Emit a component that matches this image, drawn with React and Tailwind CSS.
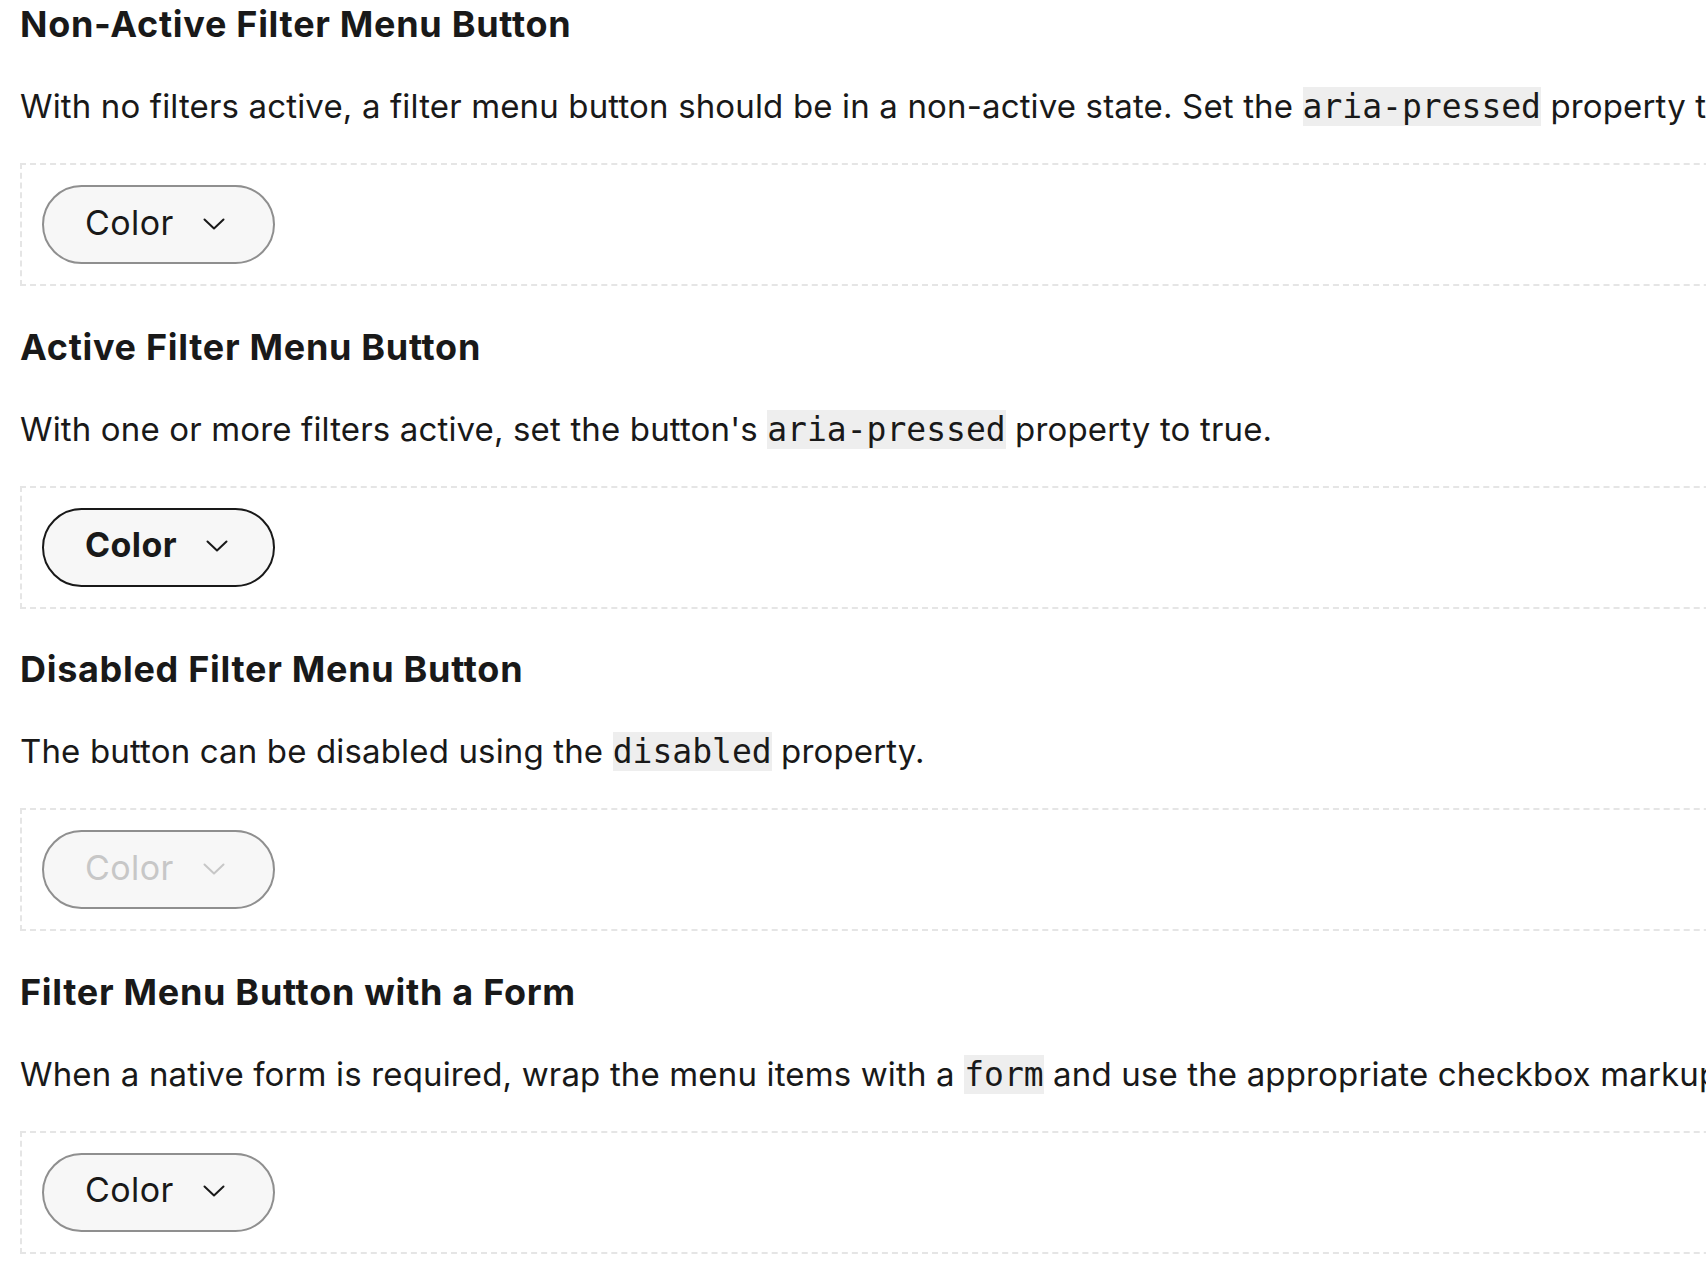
import React from 'react';

const Chevron = ({ className }) => (
  <svg width="22" height="12" viewBox="0 0 22 12" fill="none" className={className}>
    <path d="M1.5 1.5 L11 10.5 L20.5 1.5" stroke="currentColor" strokeWidth="2" strokeLinecap="round" strokeLinejoin="round" />
  </svg>
);

const FilterMenuButton = ({ variant = 'default' }) => {
  const styles = {
    default: 'border-[#8f8f8f] text-[#191919] font-normal',
    active: 'border-[#191919] text-[#191919] font-bold',
    disabled: 'border-[#8f8f8f] text-[#c7c7c7] font-normal',
  };
  return (
    <button
      type="button"
      aria-pressed={variant === 'active'}
      disabled={variant === 'disabled'}
      className={`flex h-[79px] w-[233px] items-center rounded-full border-2 bg-[#f7f7f7] pl-[41px] text-[34px] leading-none tracking-[0.4px] ${styles[variant]}`}
    >
      <span className="mb-[4px]">Color</span>
      <Chevron className="ml-[29px] mb-[2px]" />
    </button>
  );
};

const Code = ({ children }) => (
  <code className="bg-[#eeeeee] font-['DejaVu_Sans_Mono',monospace] text-[33px] leading-none tracking-normal">
    {children}
  </code>
);

const Section = ({ title, children, variant }) => (
  <section className="mb-[36.67px]">
    <h3 className="text-[36px] font-bold leading-[48px] tracking-[0.7px] text-[#191919]">{title}</h3>
    <p className="mt-[34px] whitespace-nowrap text-[33px] leading-[48px] tracking-[0.15px] text-[#191919]">{children}</p>
    <div className="mt-[33px] w-[1800px] border-2 border-dashed border-[#e5e5e5] p-[20px]">
      <FilterMenuButton variant={variant} />
    </div>
  </section>
);

export default function App() {
  return (
    <div className="w-full overflow-hidden bg-white font-['Inter',sans-serif]">
      <main className="pl-[20px]">
        <Section title="Non-Active Filter Menu Button" variant="default">
          With no filters active, a filter menu button should be in a non-active state. Set the <Code>aria-pressed</Code> property to false.
        </Section>
        <Section title="Active Filter Menu Button" variant="active">
          With one or more filters active, set the button's <Code>aria-pressed</Code> property to true.
        </Section>
        <Section title="Disabled Filter Menu Button" variant="disabled">
          The button can be disabled using the <Code>disabled</Code> property.
        </Section>
        <Section title="Filter Menu Button with a Form" variant="default">
          When a native form is required, wrap the menu items with a <Code>form</Code> and use the appropriate checkbox markup.
        </Section>
      </main>
    </div>
  );
}
